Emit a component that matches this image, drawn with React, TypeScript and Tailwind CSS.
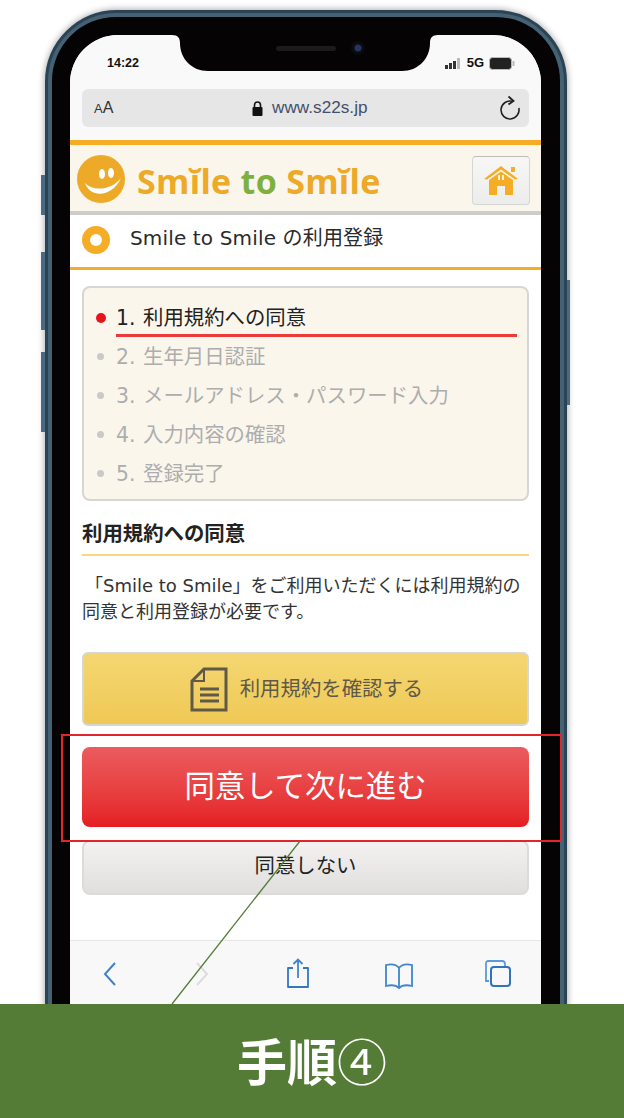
const jp = { fontFamily: '"DejaVu Sans","Noto Sans CJK JP",sans-serif' };

function Notch() {
  return (
    <svg className="absolute left-[102px] top-0" width="266" height="36" viewBox="0 0 266 36">
      <path d="M0 0H266C260 0 258 3 258 8C258 24 246 36 230 36H36C20 36 8 24 8 8C8 3 6 0 0 0Z" fill="#050303" />
      <rect x="104" y="11" width="60" height="5" rx="2.500" fill="#1b1b1b" />
      <circle cx="186" cy="13" r="7" fill="#0b0b0f" />
      <circle cx="186" cy="13" r="3.500" fill="#25345e" />
    </svg>
  );
}

function Status() {
  return (
    <div className="flex h-[54px] items-end pb-[18px] pl-[37px] pr-[26px]">
      <span className="text-[12.500px] font-bold leading-[16px] text-[#111]" style={{ fontFamily: '"Liberation Sans",sans-serif' }}>14:22</span>
      <div className="ml-auto flex items-center">
        <svg width="17" height="11" viewBox="0 0 17 11">
          <rect x="0" y="7" width="3" height="4" fill="#333" />
          <rect x="4" y="5" width="3" height="6" fill="#333" />
          <rect x="8" y="3" width="3" height="8" fill="#333" />
          <rect x="12" y="0" width="3" height="11" fill="#bbb" />
        </svg>
        <span className="ml-[5px] text-[13px] font-bold leading-[16px] text-[#111]" style={{ fontFamily: '"Liberation Sans",sans-serif' }}>5G</span>
        <svg className="ml-[5px]" width="26" height="13" viewBox="0 0 26 13">
          <rect x="0.500" y="0.500" width="22" height="12" rx="3" fill="#222" stroke="#bbb" />
          <rect x="23.500" y="4" width="2" height="5" fill="#bbb" />
        </svg>
      </div>
    </div>
  );
}

function UrlBar() {
  return (
    <div className="mx-[12px] flex h-[38px] items-center rounded-[6px] bg-[#e6e6e6] pl-[12px] pr-[7px]">
      <span className="w-[158px] leading-none text-[#333]" style={{ fontFamily: '"Liberation Sans",sans-serif' }}>
        <span className="text-[13px]">A</span><span className="text-[16px]">A</span>
      </span>
      <svg width="11" height="15" viewBox="0 0 11 15">
        <path d="M2.500 6V4a3 3 0 0 1 6 0v2" fill="none" stroke="#111" strokeWidth="1.600" />
        <rect x="0.500" y="6" width="10" height="9" rx="1" fill="#111" />
      </svg>
      <span className="ml-[9px] text-[17.200px] leading-none text-[#44506a]" style={{ fontFamily: '"Liberation Sans",sans-serif' }}>www.s22s.jp</span>
      <svg className="ml-auto" width="24" height="26" viewBox="0 0 24 26">
        <path d="M14 6.200A9 9 0 1 0 20.800 13" fill="none" stroke="#222" strokeWidth="1.600" />
        <path d="M10.500 1.500L15.500 6L10.500 9.500" fill="none" stroke="#222" strokeWidth="1.800" />
      </svg>
    </div>
  );
}

function HomeIcon() {
  return (
    <svg width="34" height="31" viewBox="0 0 34 31">
      <path d="M0 14L17 1L34 14L31 14.500L17 4.500L3 14.500Z" fill="#f5ad25" />
      <rect x="27" y="2" width="4" height="5" fill="#f5ad25" />
      <path d="M5 15L17 6.500L29 15V30H21V21H13V30H5Z" fill="#f5ad25" />
      <rect x="14" y="10" width="2" height="5" fill="#fdf3dc" />
      <rect x="18" y="10" width="2" height="5" fill="#fdf3dc" />
    </svg>
  );
}

function Header() {
  return (
    <div className="flex items-start border-t-[5px] border-b-[4px] border-t-[#f5ad25] border-b-[#cfcdca] bg-[#fbf6ec] pl-[7px] pr-[11px]" style={{ boxSizing: 'content-box', height: 66 }}>
      <svg className="mt-[10px]" width="48" height="48" viewBox="0 0 48 48">
        <circle cx="24" cy="24" r="24" fill="#eda928" />
        <path d="M8 28C13 43 35 43 44 23C35 35 16 37 8 28Z" fill="#fff" />
        <ellipse cx="25" cy="19" rx="3" ry="5" fill="#fff" />
        <ellipse cx="34" cy="18" rx="3" ry="5" fill="#fff" />
      </svg>
      <div className="ml-[12px] mt-[14px] whitespace-nowrap text-[34px] font-bold leading-[44px] tracking-[0.300px] text-[#eda928]" style={{ fontFamily: '"Open Sans",sans-serif' }}>
        Smĭle <span className="text-[#7fb03f]">to</span> Smĭle
      </div>
      <div className="ml-auto mt-[11px] flex h-[49px] w-[58px] items-center justify-center rounded-[4px] border border-[#d6d6d4] border-t-[#bdbdbb] bg-gradient-to-b from-[#f7f7f6] to-[#ececeb]">
        <HomeIcon />
      </div>
    </div>
  );
}

const steps = [
  ['1.', '利用規約への同意'],
  ['2.', '生年月日認証'],
  ['3.', 'メールアドレス・パスワード入力'],
  ['4.', '入力内容の確認'],
  ['5.', '登録完了'],
];

function Steps() {
  return (
    <div className="mx-[12px] mt-[16px] h-[215px] rounded-[8px] border-2 border-[#d8d6d2] bg-[#fbf6ec] pl-[12px] pr-[10px] pt-[10px]">
      {steps.map(([n, t], i) => (
        <div key={n} className="flex h-[39px] items-center">
          <span className={i === 0 ? 'h-[10px] w-[10px] shrink-0 rounded-full bg-[#e8141c]' : 'ml-[1px] h-[7px] w-[7px] shrink-0 rounded-full bg-[#c9c9c9]'} />
          <div className={i === 0
            ? 'ml-[10px] flex h-[38px] flex-1 items-center border-b-[3px] border-[#ec3a3a] pt-[4px] text-[#222]'
            : 'ml-[12px] flex flex-1 items-center text-[#adadad]'}>
            <span className="w-[27px] text-[20.400px] leading-[26px]">{n}</span>
            <span className="whitespace-nowrap text-[20.400px] leading-[26px]">{t}</span>
          </div>
        </div>
      ))}
    </div>
  );
}

function DocIcon() {
  return (
    <svg width="38" height="45" viewBox="0 0 38 45">
      <path d="M14 2H36V43H2V14Z" fill="none" stroke="#5f5a48" strokeWidth="3" />
      <path d="M14 2V14H2" fill="none" stroke="#5f5a48" strokeWidth="2" />
      <path d="M10 22H29M10 28H29M10 34H29" stroke="#5f5a48" strokeWidth="3" />
    </svg>
  );
}

function Toolbar() {
  return (
    <div className="absolute left-0 right-0 top-[905px] flex h-[70px] items-start border-t border-[#e6e6e6] bg-[#f8f8f8] pl-[32px] pt-[17px]">
      <svg width="16" height="26" viewBox="0 0 16 26" className="mt-[3px]"><path d="M13 2L3 13L13 24" fill="none" stroke="#3f82c8" strokeWidth="2" /></svg>
      <svg width="16" height="26" viewBox="0 0 16 26" className="mt-[3px] ml-[76px]"><path d="M3 2L13 13L3 24" fill="none" stroke="#dcdcdc" strokeWidth="2" /></svg>
      <svg width="24" height="30" viewBox="0 0 24 30" className="ml-[76px]">
        <path d="M7 10H2V29H22V10H17" fill="none" stroke="#3477c0" strokeWidth="1.800" strokeLinejoin="round" />
        <path d="M12 20V2M7.500 6L12 1.500L16.500 6" fill="none" stroke="#3f86cc" strokeWidth="1.800" />
      </svg>
      <svg width="30" height="26" viewBox="0 0 30 26" className="ml-[74px] mt-[5px]">
        <path d="M15 5C12 1 6 1 2 2V23C6 22 12 22 15 25C18 22 24 22 28 23V2C24 1 18 1 15 5ZM15 5V25" fill="none" stroke="#3f86cc" strokeWidth="1.800" />
      </svg>
      <svg width="30" height="28" viewBox="0 0 30 28" className="ml-[69px] mt-[2px]">
        <path d="M6 21H3V3C3 2 4 1 5 1H19C21 1 22 2 22 4V6" fill="none" stroke="#5c9ad8" strokeWidth="1.800" />
        <rect x="8" y="7" width="19" height="19" rx="3" fill="none" stroke="#2f74bc" strokeWidth="2" />
      </svg>
    </div>
  );
}

function Screen() {
  return (
    <div className="relative h-[1010px] overflow-hidden rounded-t-[48px] bg-white" style={jp}>
      <div className="bg-[#f9f9f9] pb-[13px]">
        <Status />
        <UrlBar />
      </div>
      <Header />
      <div className="flex h-[55px] items-center border-b-[3px] border-[#f5ad25] pl-[12px]">
        <span className="mb-[3px] h-[28px] w-[28px] rounded-full border-[8px] border-[#f5ad25] bg-white" />
        <span className="ml-[20px] mb-[6px] whitespace-nowrap text-[20px] leading-[26px] tracking-[0.150px] text-[#2a2a2a]">Smile to Smile の利用登録</span>
      </div>
      <Steps />
      <div className="mx-[12px] mt-[20px] h-[35px] border-b-2 border-[#fbd582] text-[20.400px] font-bold leading-[26px] text-[#222]">利用規約への同意</div>
      <p className="mx-[12px] mt-[17px] text-[18px] leading-[26px] text-[#333]">
        <span className="ml-[3px]">「Smile to Smile」をご利用いただくには利用規約の</span>
        <br />
        同意と利用登録が必要です。
      </p>
      <div className="mx-[12px] mt-[27px] flex h-[74px] items-center justify-center rounded-[6px] border-2 border-[#d8d6d2] bg-gradient-to-b from-[#f4d671] to-[#efc955] pl-[2px]">
        <DocIcon />
        <span className="ml-[12px] text-[20.400px] leading-[26px] text-[#5f5a48]">利用規約を確認する</span>
      </div>
      <div className="mx-[12px] mt-[21px] flex h-[80px] items-center justify-center rounded-[8px] bg-gradient-to-b from-[#eb5b5e] to-[#e51c22] text-[30.400px] leading-[40px] text-white">同意して次に進む</div>
      <div className="mx-[12px] mt-[13px] flex h-[55px] items-center justify-center rounded-[8px] border-2 border-[#dcdbd9] bg-gradient-to-b from-[#f3f2f1] to-[#e0dfde] pb-[4px] text-[20.400px] leading-[26px] text-[#222]">同意しない</div>
      <Toolbar />
      <Notch />
    </div>
  );
}

export default function App() {
  return (
    <div className="relative flex h-[1118px] w-[624px] flex-col overflow-hidden bg-white">
      <div className="relative h-[1004px] overflow-hidden pl-[45px] pt-[10px]">
        <div className="absolute left-[41px] top-[175px] h-[40px] w-[4px] bg-[#4b6a80]" />
        <div className="absolute left-[41px] top-[252px] h-[78px] w-[4px] bg-[#4b6a80]" />
        <div className="absolute left-[41px] top-[352px] h-[80px] w-[4px] bg-[#4b6a80]" />
        <div className="absolute left-[567px] top-[280px] h-[125px] w-[3px] bg-[#4b6a80]" />
        <div className="h-[1100px] w-[522px] rounded-[72px] border-[3px] border-[#2a4455] bg-[#456274] p-[4px] shadow-[0_0_6px_1px_#b0b0b0]">
          <div className="h-full rounded-[64px] bg-[#050303] pl-[18px] pr-[19px] pt-[18px]">
            <Screen />
          </div>
        </div>
      </div>
      <div className="flex h-[114px] items-center justify-center bg-[#557c36] pb-[4px] text-[50px] font-bold leading-[60px] text-white" style={{ fontFamily: '"Noto Sans CJK JP",sans-serif' }}>
        手順<span className="font-normal">④</span>
      </div>
      <div className="absolute left-[61px] top-[734px] h-[108px] w-[501px] border-2 border-[#e0262b]" />
      <svg className="absolute left-[170px] top-[841px]" width="132" height="164" viewBox="0 0 132 164">
        <path d="M130 0L2 163" stroke="#557c36" strokeWidth="1.300" fill="none" />
      </svg>
    </div>
  );
}
